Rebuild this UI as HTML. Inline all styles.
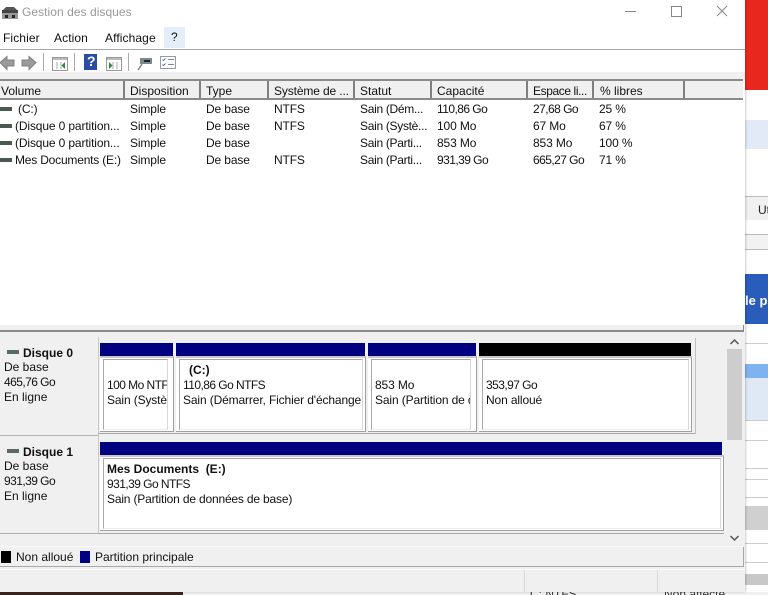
<!DOCTYPE html>
<html lang="fr"><head><meta charset="utf-8"><title>Gestion des disques</title>
<style>
html,body{margin:0;padding:0;background:#fff}
#p{position:relative;width:768px;height:595px;overflow:hidden;background:#fff;font:12px "Liberation Sans",sans-serif;color:#111}
#p div,#p svg{position:absolute}
.t{white-space:nowrap;line-height:15px;height:15px}
.r{letter-spacing:-.13px}
.g{letter-spacing:-.55px}
.h{top:81px;height:17px;background:#f0f0f0;border-right:2px solid #808080;box-sizing:border-box}
.b{font-weight:bold}
.o{background:#fff;border-top:2px solid #c8c8c8;border-right:1px solid #a0a0a0;border-bottom:1px solid #a0a0a0;box-sizing:border-box}
.box{background:#fff;border:1px solid #a8a8a8;border-right-color:#d8d8d8;border-bottom-color:#ececec;box-sizing:border-box;overflow:hidden}
.hd{background:#000080}
</style></head><body><div id="p">
<!-- background right strip -->
<div style="left:745px;top:0;width:23px;height:90px;background:#e8281e"></div>
<div style="left:745px;top:120px;width:23px;height:29px;background:#e2eaf7"></div>
<div style="left:745px;top:196px;width:23px;height:1px;background:#bbb"></div>
<div style="left:745px;top:197px;width:23px;height:23px;background:#f0f0f0"></div>
<div class="t" style="left:758px;top:203px;color:#222">Ut</div>
<div style="left:745px;top:234px;width:23px;height:14px;background:#f2f2f2;border-top:1px solid #bbb;border-bottom:1px solid #bbb"></div>
<div style="left:745px;top:274px;width:23px;height:50px;background:#2a5cbc"></div>
<div class="t b" style="left:745px;top:293px;color:#fff;width:23px;overflow:hidden;font-size:13px">le p</div>
<div style="left:745px;top:343px;width:23px;height:1px;background:#ccc"></div>
<div style="left:745px;top:364px;width:23px;height:14px;background:#7fb2f0"></div>
<div style="left:745px;top:378px;width:23px;height:42px;background:#dfe9f5"></div>
<div style="left:745px;top:420px;width:23px;height:1px;background:#ccc"></div>
<div style="left:745px;top:440px;width:23px;height:1px;background:#ccc"></div>
<div style="left:745px;top:468px;width:23px;height:1px;background:#ccc"></div>
<div style="left:745px;top:479px;width:23px;height:1px;background:#ccc"></div>
<div style="left:745px;top:497px;width:23px;height:1px;background:#ccc"></div>
<div style="left:745px;top:506px;width:23px;height:24px;background:#d0d0d0"></div>
<div style="left:745px;top:543px;width:23px;height:1px;background:#ccc"></div>
<div style="left:745px;top:562px;width:23px;height:1px;background:#ccc"></div>
<div style="left:745px;top:574px;width:23px;height:11px;background:#c8c8c8"></div>
<!-- bottom strip -->
<div style="left:0;top:592px;width:183px;height:3px;background:#3a2420"></div>
<div style="left:183px;top:592px;width:585px;height:3px;background:#f0f0f0"></div>
<div class="t" style="left:530px;top:587px;color:#333">C: NTFS</div>
<div class="t" style="left:664px;top:587px;color:#333">Non affecté</div>
<!-- window -->
<div style="left:0;top:0;width:745px;height:592px;background:#fff;box-shadow:1px 0 2px rgba(0,0,0,.2)"></div>
<!-- title -->
<svg style="left:2px;top:7px" width="16" height="12" viewBox="0 0 16 12"><path d="M4 0h8l3 3H1z" fill="#555"/><rect x="0" y="3" width="16" height="3" fill="#444"/><rect x="0" y="6" width="16" height="6" fill="#999"/><rect x="3" y="8" width="3" height="3" fill="#222"/><rect x="10" y="8" width="3" height="3" fill="#222"/></svg>
<div class="t" style="left:22px;top:5px;color:#999;letter-spacing:.05px">Gestion des disques</div>
<div style="left:625px;top:11px;width:11px;height:1px;background:#888"></div>
<div style="left:671px;top:6px;width:9px;height:9px;border:1px solid #888"></div>
<svg style="left:716px;top:5px" width="12" height="12" viewBox="0 0 12 12"><path d="M1 1l10 10M11 1L1 11" stroke="#888" stroke-width="1" fill="none"/></svg>
<!-- menu -->
<div class="t" style="left:3px;top:31px;letter-spacing:.1px">Fichier</div>
<div class="t" style="left:54px;top:31px;letter-spacing:.1px">Action</div>
<div class="t" style="left:105px;top:31px;letter-spacing:.1px">Affichage</div>
<div style="left:164px;top:27px;width:21px;height:21px;background:#e3eef9"></div>
<div class="t" style="left:171px;top:30px">?</div>
<div style="left:0;top:49px;width:745px;height:1px;background:#a8a8a8"></div>
<!-- toolbar -->
<svg style="left:0;top:54px" width="40" height="17" viewBox="0 0 40 17"><path d="M0 8.500L7 2.500v3.500h7v6H7v3.500z" fill="#9a9a9a" stroke="#808080"/><path d="M36 8.500L29 2.500v3.500h-7v6h7v3.500z" fill="#9a9a9a" stroke="#808080"/></svg>
<div style="left:43px;top:53px;width:1px;height:18px;background:#aaa"></div>
<svg style="left:52px;top:57px" width="16" height="14" viewBox="0 0 16 14"><rect x=".5" y=".5" width="15" height="13" fill="#fff" stroke="#999"/><rect x="1" y="1" width="14" height="2" fill="#bbb"/><path d="M5 5v7M9 5v7" stroke="#aaa"/><path d="M13 5v7L9.500 8.500z" fill="#2a8a3a"/></svg>
<div style="left:74px;top:53px;width:1px;height:18px;background:#aaa"></div>
<div style="left:84px;top:54px;width:13px;height:16px;background:#2c4aa8"></div>
<div class="t b" style="left:87px;top:54px;color:#fff;font-size:14px">?</div>
<svg style="left:106px;top:57px" width="16" height="14" viewBox="0 0 16 14"><rect x=".5" y=".5" width="15" height="13" fill="#fff" stroke="#999"/><rect x="1" y="1" width="14" height="2" fill="#bbb"/><path d="M7 5v7M11 5v7" stroke="#aaa"/><path d="M3 5v7L6.500 8.500z" fill="#2a8a3a"/></svg>
<div style="left:128px;top:53px;width:1px;height:18px;background:#aaa"></div>
<svg style="left:137px;top:56px" width="16" height="15" viewBox="0 0 16 15"><rect x="3" y="2" width="12" height="6" fill="#7a8a88"/><rect x="7" y="4" width="6" height="2" fill="#223"/><path d="M5 8L1 14" stroke="#888" stroke-width="1.500"/></svg>
<svg style="left:160px;top:56px" width="16" height="13" viewBox="0 0 16 13"><rect x=".5" y=".5" width="15" height="12" fill="#fff" stroke="#99a"/><path d="M2.500 3.500l1 1 2-2M2.500 8.500l1 1 2-2" stroke="#5a7aa8" fill="none"/><path d="M8 3.500h6M8 8.500h6" stroke="#888"/></svg>
<div style="left:0;top:72px;width:745px;height:8px;background:#f0f0f0"></div>
<!-- header -->
<div style="left:0;top:79px;width:743px;height:2px;background:#8a8a8a"></div>
<div style="left:0;top:98px;width:743px;height:2px;background:#8a8a8a"></div>
<div class="h" style="left:0;width:125px"></div>
<div class="h" style="left:125px;width:76px"></div>
<div class="h" style="left:201px;width:68px"></div>
<div class="h" style="left:269px;width:86px"></div>
<div class="h" style="left:355px;width:77px"></div>
<div class="h" style="left:432px;width:96px"></div>
<div class="h" style="left:528px;width:66px"></div>
<div class="h" style="left:594px;width:91px"></div>
<div class="h" style="left:685px;width:58px;border:0"></div>
<div class="t" style="left:1px;top:84px">Volume</div>
<div class="t" style="left:130px;top:84px">Disposition</div>
<div class="t" style="left:206px;top:84px">Type</div>
<div class="t r" style="left:274px;top:84px">Système de ...</div>
<div class="t" style="left:360px;top:84px">Statut</div>
<div class="t" style="left:437px;top:84px">Capacité</div>
<div class="t" style="left:533px;top:84px;letter-spacing:-.4px">Espace li...</div>
<div class="t" style="left:600px;top:84px">% libres</div>
<!-- rows -->
<div style="left:0;top:107px;width:12px;height:4px;background:#4a5a50"></div>
<div style="left:0;top:124px;width:12px;height:4px;background:#4a5a50"></div>
<div style="left:0;top:141px;width:12px;height:4px;background:#4a5a50"></div>
<div style="left:0;top:158px;width:12px;height:4px;background:#4a5a50"></div>
<div class="t r" style="left:18px;top:102px">(C:)</div>
<div class="t r" style="left:130px;top:102px">Simple</div><div class="t r" style="left:206px;top:102px">De base</div><div class="t r" style="left:274px;top:102px">NTFS</div><div class="t" style="left:360px;top:102px;letter-spacing:-.3px">Sain (Dém...</div><div class="t g" style="left:437px;top:102px">110,86 Go</div><div class="t g" style="left:533px;top:102px">27,68 Go</div><div class="t r" style="left:599px;top:102px">25 %</div>
<div class="t r" style="left:15px;top:119px">(Disque 0 partition...</div>
<div class="t r" style="left:130px;top:119px">Simple</div><div class="t r" style="left:206px;top:119px">De base</div><div class="t r" style="left:274px;top:119px">NTFS</div><div class="t" style="left:360px;top:119px;letter-spacing:-.3px">Sain (Systè...</div><div class="t r" style="left:437px;top:119px">100 Mo</div><div class="t r" style="left:533px;top:119px">67 Mo</div><div class="t r" style="left:599px;top:119px">67 %</div>
<div class="t r" style="left:15px;top:136px">(Disque 0 partition...</div>
<div class="t r" style="left:130px;top:136px">Simple</div><div class="t r" style="left:206px;top:136px">De base</div><div class="t" style="left:360px;top:136px;letter-spacing:-.3px">Sain (Parti...</div><div class="t r" style="left:437px;top:136px">853 Mo</div><div class="t r" style="left:533px;top:136px">853 Mo</div><div class="t r" style="left:599px;top:136px">100 %</div>
<div class="t" style="left:15px;top:153px;letter-spacing:-.2px">Mes Documents (E:)</div>
<div class="t r" style="left:130px;top:153px">Simple</div><div class="t r" style="left:206px;top:153px">De base</div><div class="t r" style="left:274px;top:153px">NTFS</div><div class="t" style="left:360px;top:153px;letter-spacing:-.3px">Sain (Parti...</div><div class="t g" style="left:437px;top:153px">931,39 Go</div><div class="t g" style="left:533px;top:153px">665,27 Go</div><div class="t r" style="left:599px;top:153px">71 %</div>
<!-- splitter -->
<div style="left:0;top:325px;width:745px;height:5px;background:#f0f0f0"></div>
<div style="left:0;top:330px;width:743px;height:2px;background:#8a8a8a"></div>
<div style="left:743px;top:325px;width:1px;height:7px;background:#8a8a8a"></div>
<!-- graphical pane -->
<div style="left:0;top:332px;width:745px;height:260px;background:#f0f0f0"></div>
<div style="left:98px;top:337px;width:1px;height:197px;background:#c8c8c8"></div>
<div style="left:0;top:435px;width:98px;height:1px;background:#b0b0b0"></div>
<div style="left:0;top:533px;width:98px;height:1px;background:#b0b0b0"></div>
<div style="left:98px;top:433px;width:598px;height:1px;background:#a8a8a8"></div>
<div style="left:98px;top:533px;width:626px;height:1px;background:#a8a8a8"></div>
<div style="left:695px;top:338px;width:1px;height:96px;background:#c0c0c0"></div>
<!-- Disque 0 -->
<div style="left:7px;top:350px;width:12px;height:4px;background:#5a6a60"></div>
<div class="t b" style="left:23px;top:346px">Disque 0</div>
<div class="t" style="left:4px;top:360px">De base</div>
<div class="t g" style="left:4px;top:375px">465,76 Go</div>
<div class="t" style="left:4px;top:390px">En ligne</div>
<div class="hd" style="left:100px;top:343px;width:73px;height:13px"></div>
<div class="hd" style="left:176px;top:343px;width:189px;height:13px"></div>
<div class="hd" style="left:368px;top:343px;width:108px;height:13px"></div>
<div style="left:479px;top:343px;width:212px;height:13px;background:#000"></div>
<div class="o" style="left:100px;top:356px;width:74px;height:76px"></div>
<div class="box" style="left:103px;top:359px;width:65px;height:71px"><div class="t g" style="left:3px;top:18px">100 Mo NTFS</div><div class="t r" style="left:3px;top:33px">Sain (Système</div></div>
<div class="o" style="left:176px;top:356px;width:190px;height:76px"></div>
<div class="box" style="left:179px;top:359px;width:184px;height:71px"><div class="t b" style="left:9px;top:3px">(C:)</div><div class="t g" style="left:3px;top:18px">110,86 Go NTFS</div><div class="t r" style="left:3px;top:33px">Sain (Démarrer, Fichier d'échange</div></div>
<div class="o" style="left:368px;top:356px;width:109px;height:76px"></div>
<div class="box" style="left:371px;top:359px;width:100px;height:71px"><div class="t r" style="left:3px;top:18px">853 Mo</div><div class="t r" style="left:3px;top:33px">Sain (Partition de données</div></div>
<div class="o" style="left:479px;top:356px;width:213px;height:76px"></div>
<div class="box" style="left:482px;top:359px;width:207px;height:71px"><div class="t g" style="left:3px;top:18px">353,97 Go</div><div class="t r" style="left:3px;top:33px">Non alloué</div></div>
<!-- Disque 1 -->
<div style="left:7px;top:449px;width:12px;height:4px;background:#5a6a60"></div>
<div class="t b" style="left:23px;top:445px">Disque 1</div>
<div class="t" style="left:4px;top:459px">De base</div>
<div class="t g" style="left:4px;top:474px">931,39 Go</div>
<div class="t" style="left:4px;top:489px">En ligne</div>
<div class="hd" style="left:100px;top:442px;width:622px;height:13px"></div>
<div class="o" style="left:100px;top:455px;width:624px;height:76px"></div>
<div class="box" style="left:103px;top:458px;width:618px;height:71px"><div class="t b" style="left:3px;top:3px">Mes Documents&nbsp; (E:)</div><div class="t g" style="left:3px;top:18px">931,39 Go NTFS</div><div class="t" style="left:3px;top:33px;letter-spacing:-.18px">Sain (Partition de données de base)</div></div>
<!-- scrollbar -->
<div style="left:727px;top:349px;width:15px;height:91px;background:#cdcdcd"></div>
<svg style="left:729px;top:338px" width="11" height="8" viewBox="0 0 11 8"><path d="M1.500 6L5.500 2l4 4" stroke="#555" stroke-width="1.500" fill="none"/></svg>
<svg style="left:729px;top:534px" width="11" height="8" viewBox="0 0 11 8"><path d="M1.500 2l4 4 4-4" stroke="#555" stroke-width="1.500" fill="none"/></svg>
<!-- legend -->
<div style="left:0;top:546px;width:743px;height:1px;background:#fafafa"></div>
<div style="left:0;top:566px;width:743px;height:1px;background:#a8a8a8"></div>
<div style="left:743px;top:547px;width:1px;height:20px;background:#a8a8a8"></div>
<div style="left:1px;top:551px;width:10px;height:12px;background:#000"></div>
<div class="t" style="left:16px;top:550px">Non alloué</div>
<div style="left:80px;top:551px;width:10px;height:12px;background:#000080"></div>
<div class="t" style="left:95px;top:550px">Partition principale</div>
<!-- status -->
<div style="left:0;top:569px;width:745px;height:1px;background:#fafafa"></div>
<div style="left:524px;top:570px;width:1px;height:22px;background:#d8d8d8"></div>
<div style="left:657px;top:570px;width:1px;height:22px;background:#d8d8d8"></div>
</div></body></html>
